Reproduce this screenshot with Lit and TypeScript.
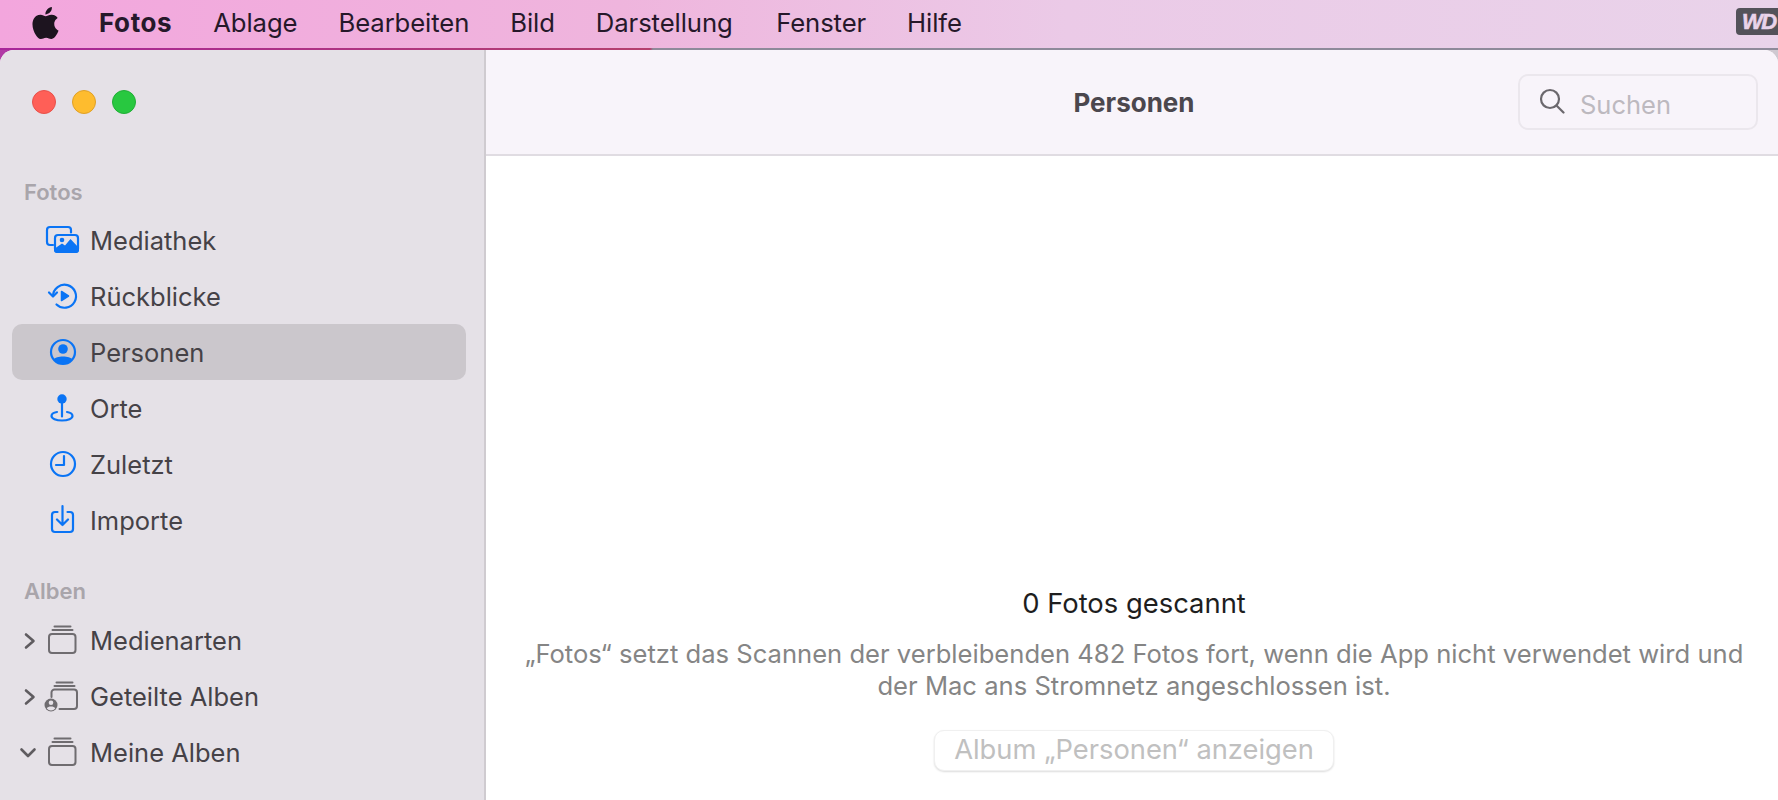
import { LitElement, html, css, svg } from "lit";
import { customElement } from "lit/decorators.js";

const B = "#0a74f5";
const G = "#6f6c70";

const blue = (body: unknown) => html`<svg class="ic" viewBox="0 0 36 36" fill="none" stroke=${B} stroke-width="2.2" stroke-linecap="round" stroke-linejoin="round">${body}</svg>`;
const grey = (body: unknown) => html`<svg class="ic" viewBox="0 0 36 36" fill="none" stroke=${G} stroke-width="2" stroke-linecap="round" stroke-linejoin="round">${body}</svg>`;

const icons: Record<string, unknown> = {
  library: blue(svg`
    <path d="M8 23H5a3 3 0 0 1-3-3V8a3 3 0 0 1 3-3h18a3 3 0 0 1 3 3v2.5"/>
    <rect x="10" y="13" width="23" height="17" rx="3"/>
    <path fill=${B} stroke="none" d="M9 27l8-5.5 3 2 5.5-6.5L34 26v2a3 3 0 0 1-3 3H12a3 3 0 0 1-3-3z"/>
    <circle cx="17" cy="18" r="2.3" fill=${B} stroke="none"/>`),
  memories: blue(svg`
    <path d="M8 18A11.5 11.5 0 1 1 11.5 26.5"/>
    <path d="M4 14.5L8 18.5L12 14.5"/>
    <path fill=${B} stroke=${B} stroke-width="1.5" d="M16.5 13.5L23.5 18L16.5 22.5z"/>`),
  people: blue(svg`
    <circle cx="18" cy="18" r="12"/>
    <circle cx="18" cy="15" r="4.8" fill=${B} stroke="none"/>
    <path fill=${B} stroke="none" d="M8.5 25.5C11 21.5 25 21.5 27.5 25.5A12.5 12.5 0 0 1 8.5 25.5z"/>`),
  places: blue(svg`
    <circle cx="17" cy="9" r="4.7" fill=${B} stroke="none"/>
    <path d="M17 12v14.5"/>
    <path d="M12 22C8.5 22.5 6.5 24.2 6.5 26c0 2.5 4.5 4.5 10.5 4.5s10.5-2 10.5-4.5c0-1.8-2-3.5-5.5-4"/>`),
  recent: blue(svg`
    <circle cx="18" cy="18" r="12"/>
    <path d="M19 10v9h-8"/>`),
  imports: blue(svg`
    <path d="M12.5 10H10a3 3 0 0 0-3 3v14a3 3 0 0 0 3 3h15a3 3 0 0 0 3-3V13a3 3 0 0 0-3-3h-2.5"/>
    <path d="M17.5 4v19M12 17.5l5.5 5.5 5.5-5.5"/>`),
  album: grey(svg`
    <rect x="4" y="12" width="26.5" height="19" rx="3"/>
    <path d="M7.5 8h20M9.5 4.5h16"/>`),
  shared: grey(svg`
    <path d="M6.5 19V14.5a3 3 0 0 1 3-3H29a3 3 0 0 1 3 3V28a3 3 0 0 1-3 3H14.5"/>
    <path d="M9.5 8h20M11.5 4.5h16"/>
    <circle cx="6" cy="27" r="6.5" fill=${G} stroke="none"/>
    <circle cx="6" cy="24.8" r="2.3" fill="#e5e1e7" stroke="none"/>
    <path fill="#e5e1e7" stroke="none" d="M1.8 30.5c1-2.6 7.4-2.6 8.4 0a5.5 5.5 0 0 1-8.4 0z"/>`),
};

const chevR = html`<svg class="chev" viewBox="0 0 16 16" fill="none" stroke="#5f5c60" stroke-width="2.6" stroke-linecap="round" stroke-linejoin="round"><path d="M6 2.5L13.5 9L6 15.5"/></svg>`;
const chevD = html`<svg class="chev" viewBox="0 0 16 16" fill="none" stroke="#5f5c60" stroke-width="2.6" stroke-linecap="round" stroke-linejoin="round"><path d="M1.5 5.5L8 12L14.5 5.5"/></svg>`;

const fotos = [
  ["library", "Mediathek"],
  ["memories", "Rückblicke"],
  ["people", "Personen", true],
  ["places", "Orte"],
  ["recent", "Zuletzt"],
  ["imports", "Importe"],
] as [string, string, boolean?][];

const alben = [
  ["album", "Medienarten", chevR],
  ["shared", "Geteilte Alben", chevR],
  ["album", "Meine Alben", chevD],
] as [string, string, unknown][];

@customElement("app-root")
export class AppRoot extends LitElement {
  static styles = css`
    :host {
      display: block;
      width: 1778px;
      height: 800px;
      overflow: hidden;
      font-family: Inter, "Noto Sans", sans-serif;
      background: #fff;
    }
    .menubar {
      height: 48px;
      box-sizing: border-box;
      padding: 0 0 3px 32px;
      display: flex;
      align-items: center;
      background: linear-gradient(90deg, #f3a6dd 0%, #efb5dd 35%, #ebcae7 60%, #e9d3ea 100%);
      color: #26182a;
      font-size: 25.7px;
      letter-spacing: -0.1px;
      position: relative;
    }
    .apple { width: 27px; height: 32px; margin-right: 40px; fill: #1d141f; }
    .menu { display: flex; gap: 41px; }
    .menu b { font-weight: 700; font-size: 26px; letter-spacing: 0.6px; }
    .menu .wide { margin-right: 2.5px; }
    .wd {
      position: absolute;
      right: 0;
      top: 8px;
      width: 42px;
      height: 27px;
      border-radius: 4px 0 0 4px;
      background: #53525a;
      color: #e9d3ea;
      font: italic 700 22px/27px "Liberation Sans", sans-serif;
      -webkit-text-stroke: 0.6px #e9d3ea;
      padding-left: 6px;
      box-sizing: border-box;
      letter-spacing: -1.5px;
      white-space: nowrap;
    }
    .desk {
      height: 752px;
      padding-top: 2px;
      box-sizing: border-box;
      background:
        linear-gradient(90deg, #a8269a 0, #b5406e 650px, #8e8a9a 653px, #8e8a9a 100%) 0 0 / 100% 2px no-repeat,
        linear-gradient(90deg, #b03aa5 50%, #cfc9d1 50%);
    }
    .window {
      height: 750px;
      display: flex;
      border-radius: 14px 14px 0 0;
      overflow: hidden;
      background: #fff;
    }
    .side {
      width: 486px;
      flex: none;
      box-sizing: border-box;
      background: #e5e1e7;
      border-right: 2px solid #cfcbd0;
      color: #454247;
    }
    .traffic { height: 103px; display: flex; align-items: center; gap: 16px; padding-left: 32px; }
    .traffic i { width: 24px; height: 24px; border-radius: 50%; box-sizing: border-box; border: 1px solid; }
    .r { background: #ff5f57; border-color: #e8504a !important; }
    .y { background: #febc2e; border-color: #e0a026 !important; }
    .g { background: #28c840; border-color: #20ae36 !important; }
    .label {
      height: 30px;
      line-height: 30px;
      margin: 24px 0 5px 24px;
      font-size: 22px;
      font-weight: 600;
      color: #a9a5ab;
    }
    .label.second { margin: 28px 0 6px 24px; }
    .row {
      height: 56px;
      margin: 0 18px 0 12px;
      padding-left: 8px;
      display: flex;
      align-items: center;
      border-radius: 10px;
      font-size: 25.5px;
    }
    .row.sel { background: #cbc7cc; }
    .chevslot { width: 16px; height: 16px; flex: none; margin-right: 9px; }
    .chev { display: block; width: 16px; height: 16px; overflow: visible; }
    .ic { display: block; width: 36px; height: 36px; flex: none; margin-right: 9px; overflow: visible; }
    .main { flex: 1; display: flex; flex-direction: column; min-width: 0; }
    .head {
      height: 106px;
      flex: none;
      box-sizing: border-box;
      background: #f8f4fa;
      border-bottom: 2px solid #e0dce2;
      display: flex;
      align-items: center;
      position: relative;
      padding-right: 20px;
      justify-content: flex-end;
    }
    .title {
      position: absolute;
      left: 4px;
      right: 0;
      text-align: center;
      font-size: 26px;
      font-weight: 700;
      color: #4b474d;
    }
    .search {
      width: 240px;
      height: 56px;
      box-sizing: border-box;
      border: 2px solid #ebe7ed;
      border-radius: 10px;
      display: flex;
      align-items: center;
      padding-left: 19px;
      gap: 15px;
      color: #bdb9bf;
      font-size: 25.5px;
    }
    .search span { padding-top: 4px; }
    .search svg { width: 26px; height: 26px; flex: none; margin-top: -3px; }
    .body {
      flex: 1;
      display: flex;
      flex-direction: column;
      align-items: center;
      justify-content: flex-end;
      padding: 0 0 29px 4px;
      text-align: center;
    }
    .h { font-size: 27.4px; color: #1e1e1e; line-height: 32px; margin-bottom: 19px; }
    .p { font-size: 25.6px; color: #858585; line-height: 32px; width: 1240px; margin-bottom: 28px; }
    .btn {
      width: 400px;
      height: 41px;
      box-sizing: border-box;
      border-radius: 10px;
      background: #fff;
      border: 1px solid #f0f0f0;
      box-shadow: 0 1px 2px rgba(0,0,0,.14);
      color: #c0c0c0;
      font-size: 27.3px;
      line-height: 38px;
      text-align: center;
    }
  `;

  render() {
    return html`
      <div class="menubar">
        <svg class="apple" viewBox="2 0 20 24"><path d="M12.152 6.896c-.948 0-2.415-1.078-3.96-1.04-2.04.027-3.91 1.183-4.961 3.014-2.117 3.675-.546 9.103 1.519 12.09 1.013 1.454 2.208 3.09 3.792 3.039 1.52-.065 2.09-.987 3.935-.987 1.831 0 2.35.987 3.96.948 1.637-.026 2.676-1.48 3.676-2.948 1.156-1.688 1.636-3.325 1.662-3.415-.039-.013-3.182-1.221-3.22-4.857-.026-3.04 2.48-4.494 2.597-4.559-1.429-2.09-3.623-2.324-4.39-2.376-2-.156-3.675 1.09-4.61 1.09zM15.53 3.83c.843-1.012 1.4-2.427 1.245-3.83-1.207.052-2.662.805-3.532 1.818-.78.896-1.454 2.338-1.273 3.714 1.338.104 2.715-.688 3.559-1.701"/></svg>
        <div class="menu">
          <b>Fotos</b><span>Ablage</span><span>Bearbeiten</span><span>Bild</span><span class="wide">Darstellung</span><span>Fenster</span><span>Hilfe</span>
        </div>
        <div class="wd">WD</div>
      </div>
      <div class="desk">
        <div class="window">
          <div class="side">
            <div class="traffic"><i class="r"></i><i class="y"></i><i class="g"></i></div>
            <div class="label">Fotos</div>
            ${fotos.map(([ic, t, sel]) => html`<div class="row ${sel ? "sel" : ""}"><span class="chevslot"></span>${icons[ic]}<span>${t}</span></div>`)}
            <div class="label second">Alben</div>
            ${alben.map(([ic, t, c]) => html`<div class="row"><span class="chevslot">${c}</span>${icons[ic]}<span>${t}</span></div>`)}
          </div>
          <div class="main">
            <div class="head">
              <div class="title">Personen</div>
              <div class="search">
                <svg viewBox="0 0 26 26" fill="none" stroke="#6b686d" stroke-width="2.2" stroke-linecap="round"><circle cx="11" cy="11" r="9"/><path d="M17.5 17.5L24.5 24.5"/></svg>
                <span>Suchen</span>
              </div>
            </div>
            <div class="body">
              <div class="h">0 Fotos gescannt</div>
              <div class="p">„Fotos“ setzt das Scannen der verbleibenden 482 Fotos fort, wenn die App nicht verwendet wird und der Mac ans Stromnetz angeschlossen ist.</div>
              <div class="btn">Album „Personen“ anzeigen</div>
            </div>
          </div>
        </div>
      </div>
    `;
  }
}
